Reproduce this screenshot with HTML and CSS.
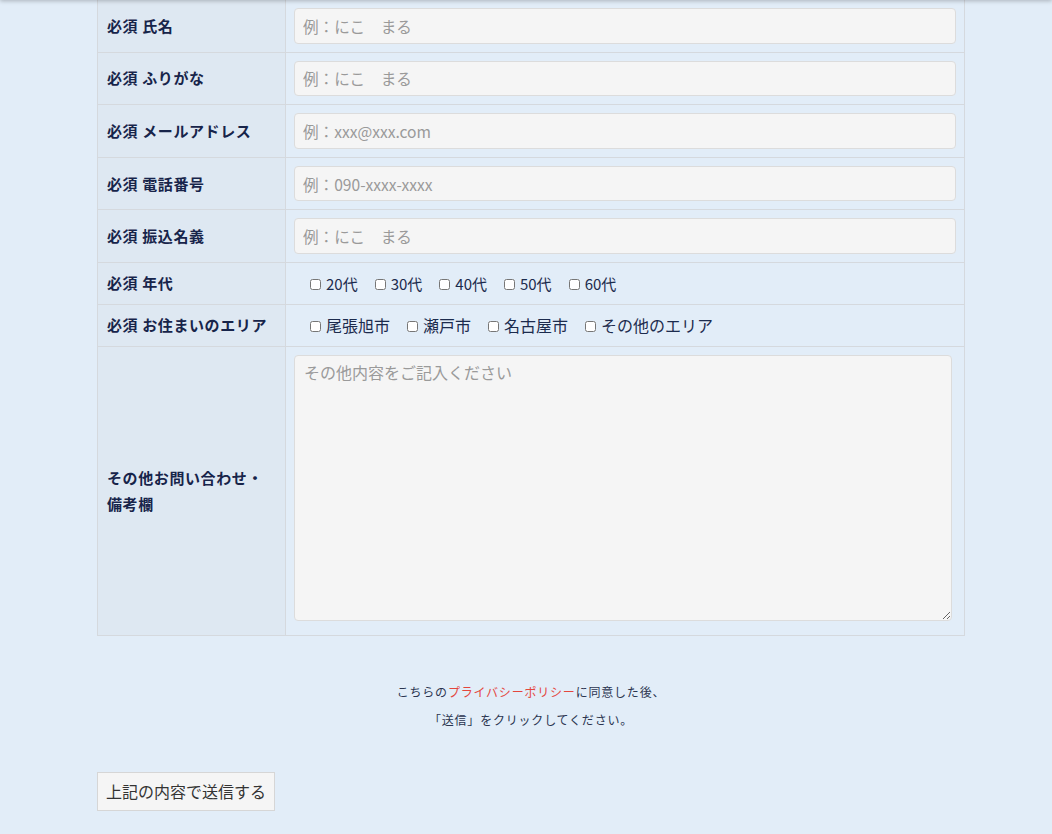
FILE: index.html
```html
<!DOCTYPE html>
<html lang="ja">
<head>
<meta charset="utf-8">
<link rel="stylesheet" href="styles.css">
</head>
<body>
<div class="topshadow"></div>
<main class="wrap">
  <table class="form">
    <tr><th>必須 氏名</th><td><input class="txt" type="text" placeholder="例：にこ　まる"></td></tr>
    <tr><th>必須 ふりがな</th><td><input class="txt" type="text" placeholder="例：にこ　まる"></td></tr>
    <tr><th>必須 メールアドレス</th><td><input class="txt" type="text" placeholder="例：xxx@xxx.com"></td></tr>
    <tr><th>必須 電話番号</th><td><input class="txt" type="text" placeholder="例：090-xxxx-xxxx"></td></tr>
    <tr><th>必須 振込名義</th><td><input class="txt" type="text" placeholder="例：にこ　まる"></td></tr>
    <tr class="chkrow"><th>必須 年代</th><td>
      <div class="checks ages">
        <label class="chk"><input type="checkbox"><span>20代</span></label>
        <label class="chk"><input type="checkbox"><span>30代</span></label>
        <label class="chk"><input type="checkbox"><span>40代</span></label>
        <label class="chk"><input type="checkbox"><span>50代</span></label>
        <label class="chk"><input type="checkbox"><span>60代</span></label>
      </div>
    </td></tr>
    <tr class="chkrow"><th>必須 お住まいのエリア</th><td>
      <div class="checks">
        <label class="chk"><input type="checkbox"><span>尾張旭市</span></label>
        <label class="chk"><input type="checkbox"><span>瀬戸市</span></label>
        <label class="chk"><input type="checkbox"><span>名古屋市</span></label>
        <label class="chk"><input type="checkbox"><span>その他のエリア</span></label>
      </div>
    </td></tr>
    <tr><th>その他お問い合わせ・<br>備考欄</th><td class="tacell"><textarea class="area" placeholder="その他内容をご記入ください"></textarea></td></tr>
  </table>
  <p class="note">こちらの<a href="#" class="policy">プライバシーポリシー</a>に同意した後、<br>「送信」をクリックしてください。</p>
  <button class="submit" type="button">上記の内容で送信する</button>
</main>
</body>
</html>
```
FILE: styles.css
```css
html, body {
  margin: 0;
  padding: 0;
}
body {
  background: #e2edf8;
  font-family: "Noto Sans CJK JP", "Noto Sans", sans-serif;
  color: #1c2b4d;
}
.topshadow {
  position: fixed;
  top: -10px;
  left: 0;
  right: 0;
  height: 10px;
  box-shadow: 0 1px 4px rgba(0,0,0,0.25);
  z-index: 5;
}
.wrap {
  margin-left: 97px;
  width: 868px;
}
.form {
  width: 868px;
  border-collapse: collapse;
  margin-top: -1px;
}
.form th, .form td {
  border: 1px solid #d5d9de;
}
.form th {
  width: 178px;
  background: #dee8f2;
  text-align: left;
  padding: 0 0 0 9px;
  font-size: 15px;
  font-weight: 700;
  color: #17244a;
  line-height: 26px;
  letter-spacing: 0.6px;
}
.form td {
  padding: 8px;
  background: #e2edf8;
}
.txt {
  display: block;
  box-sizing: border-box;
  width: 662px;
  height: 35.6px;
  margin: 0;
  padding: 0 8px;
  border: 1px solid #dcdcdc;
  border-radius: 4px;
  background: #f5f5f5;
  font-family: "Noto Sans CJK JP", sans-serif;
  font-size: 15.6px;
  color: #333;
}
.txt::placeholder, .area::placeholder {
  color: #9a9a9a;
}
.form .chkrow td {
  padding: 0 8px;
  height: 41px;
}
.checks {
  display: flex;
  align-items: center;
  gap: 17px;
  padding-left: 16px;
}
.chk {
  display: flex;
  align-items: center;
  font-size: 16px;
  color: #1c2b4d;
}
.ages .chk {
  font-size: 15px;
}
.chk input {
  width: 11px;
  height: 11px;
  margin: 2px 5px 0 0;
}
.form .tacell {
  padding: 8px 8px 14px;
}
.area {
  display: block;
  box-sizing: border-box;
  width: 658px;
  height: 266px;
  margin: 0;
  padding: 4px 9px;
  border: 1px solid #dcdcdc;
  border-radius: 4px;
  background: #f5f5f5;
  font-family: "Noto Sans CJK JP", sans-serif;
  font-size: 16px;
  resize: vertical;
}
.note {
  margin: 42px 0 0;
  text-align: center;
  font-size: 12px;
  line-height: 28px;
  color: #2b3550;
  letter-spacing: 0.8px;
}
.policy {
  color: #e4463d;
  text-decoration: none;
}
.submit {
  margin-top: 38px;
  height: 39px;
  width: 178px;
  padding: 0;
  background: #f5f5f5;
  border: 1px solid #d6d6d6;
  font-family: "Noto Sans CJK JP", sans-serif;
  font-size: 16px;
  color: #333;
}
```
